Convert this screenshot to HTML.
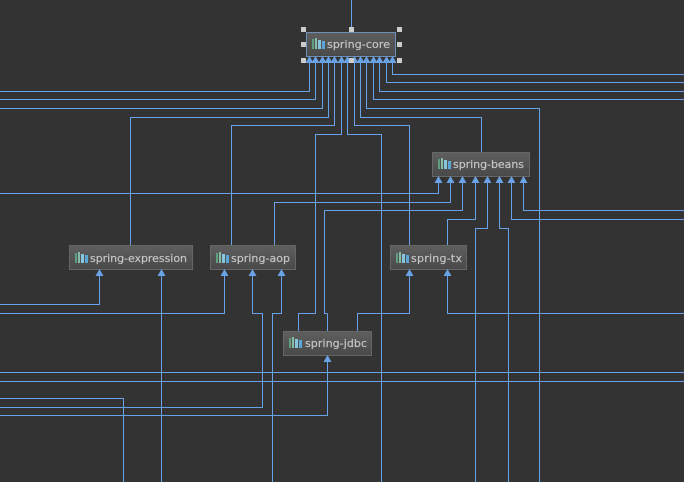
<!DOCTYPE html>
<html><head><meta charset="utf-8"><style>
html,body{margin:0;padding:0;background:#333;width:684px;height:482px;overflow:hidden}
svg{display:block;filter:blur(0.3px)}
text{font-family:"DejaVu Sans","Liberation Sans",sans-serif;font-size:11px;fill:#c4c4c4;stroke:#c4c4c4;stroke-width:.2px}
</style></head><body>
<svg width="684" height="482" viewBox="0 0 684 482" xmlns="http://www.w3.org/2000/svg">
<defs>
<linearGradient id="g" x1="0" y1="0" x2="0" y2="1"><stop offset="0" stop-color="#5e5e5e"/><stop offset="1" stop-color="#494949"/></linearGradient>
<g id="ic"><rect x="0" y="1" width="2" height="10" fill="#5f9e80"/><rect x="3" y="0" width="2" height="11" fill="#86bda6"/><rect x="6" y="2" width="3" height="9" fill="#86c6dc"/><rect x="10" y="3" width="3" height="8" fill="#5aa6d6"/></g>
<path id="a" d="M0 -1L4 6H-4Z" fill="#6aa2e6"/>
</defs>
<rect width="684" height="482" fill="#333"/>
<g fill="none" stroke="#68a2ea" stroke-width="1">
<path d="M351.5 0V29"/>
<path d="M309.5 60V91.5H0"/>
<path d="M315.5 60V99.5H0"/>
<path d="M322.5 60V108.5H0"/>
<path d="M328.5 60V117.5H130.5V245"/>
<path d="M334.5 60V125.5H231.5V245"/>
<path d="M341.5 60V134.5H315.5V313.5H298.5V331"/>
<path d="M347.5 60V134.5H381.5V482"/>
<path d="M354.5 60V125.5H409.5V245"/>
<path d="M360.5 60V117.5H481.5V152"/>
<path d="M366.5 60V108.5H539.5V482"/>
<path d="M373.5 60V99.5H684"/>
<path d="M379.5 60V91.5H684"/>
<path d="M386.5 60V82.5H684"/>
<path d="M392.5 60V74.5H684"/>
<path d="M438.5 178V193.5H0"/>
<path d="M450.5 178V202.5H274.5V245"/>
<path d="M462.5 178V210.5H324.5V313.5H327.5"/>
<path d="M475.5 178V219.5H447.5V245"/>
<path d="M487.5 178V228.5H475.5V482"/>
<path d="M499.5 178V228.5H508.5V482"/>
<path d="M511.5 178V219.5H684"/>
<path d="M523.5 178V210.5H684"/>
<path d="M99.5 271V304.5H0"/>
<path d="M161.5 271V482"/>
<path d="M224.5 271V313.5H0"/>
<path d="M252.5 271V313.5H262.5V407.5H0"/>
<path d="M281.5 271V313.5H272.5V482"/>
<path d="M409.5 271V313.5H357.5V331"/>
<path d="M447.5 271V313.5H684"/>
<path d="M327.5 313.5V331"/>
<path d="M327.5 357V415.5H0"/>
<path d="M0 372.5H684"/>
<path d="M0 381.5H684"/>
<path d="M0 398.5H123.5V482"/>
</g>
<g>
<rect x="306.5" y="32.5" width="89" height="24" fill="url(#g)" stroke="#6d8fb8"/>
<rect x="432.5" y="152.5" width="97" height="24" fill="url(#g)" stroke="#666"/>
<rect x="69.5" y="245.5" width="123" height="24" fill="url(#g)" stroke="#666"/>
<rect x="210.5" y="245.5" width="85" height="24" fill="url(#g)" stroke="#666"/>
<rect x="390.5" y="245.5" width="76" height="24" fill="url(#g)" stroke="#666"/>
<rect x="283.5" y="331.5" width="88" height="24" fill="url(#g)" stroke="#666"/>
</g>
<use href="#ic" x="312" y="38"/><text x="327" y="48" textLength="63">spring-core</text>
<use href="#ic" x="438" y="158"/><text x="453" y="168" textLength="71">spring-beans</text>
<use href="#ic" x="75" y="252"/><text x="90" y="262" textLength="97">spring-expression</text>
<use href="#ic" x="216" y="252"/><text x="231" y="262" textLength="59">spring-aop</text>
<use href="#ic" x="396" y="252"/><text x="411" y="262" textLength="51">spring-tx</text>
<use href="#ic" x="289" y="337"/><text x="305" y="347" textLength="62">spring-jdbc</text>
<g>
<use href="#a" x="309.5" y="57"/><use href="#a" x="315.5" y="57"/><use href="#a" x="322.5" y="57"/><use href="#a" x="328.5" y="57"/><use href="#a" x="334.5" y="57"/><use href="#a" x="341.5" y="57"/><use href="#a" x="347.5" y="57"/><use href="#a" x="354.5" y="57"/><use href="#a" x="360.5" y="57"/><use href="#a" x="366.5" y="57"/><use href="#a" x="373.5" y="57"/><use href="#a" x="379.5" y="57"/><use href="#a" x="386.5" y="57"/><use href="#a" x="392.5" y="57"/>
<use href="#a" x="438.5" y="177"/><use href="#a" x="450.5" y="177"/><use href="#a" x="462.5" y="177"/><use href="#a" x="475.5" y="177"/><use href="#a" x="487.5" y="177"/><use href="#a" x="499.5" y="177"/><use href="#a" x="511.5" y="177"/><use href="#a" x="523.5" y="177"/>
<use href="#a" x="99.5" y="270"/><use href="#a" x="161.5" y="270"/><use href="#a" x="224.5" y="270"/><use href="#a" x="252.5" y="270"/><use href="#a" x="281.5" y="270"/><use href="#a" x="409.5" y="270"/><use href="#a" x="447.5" y="270"/><use href="#a" x="327.5" y="356"/>
</g>
<g fill="#cdcdcd">
<rect x="301" y="27" width="5" height="5"/><rect x="349" y="27" width="5" height="5"/><rect x="397" y="27" width="5" height="5"/>
<rect x="301" y="42" width="5" height="5"/><rect x="397" y="42" width="5" height="5"/>
<rect x="301" y="58" width="5" height="5"/><rect x="349" y="58" width="5" height="5"/><rect x="397" y="58" width="5" height="5"/>
</g>
</svg>
</body></html>
